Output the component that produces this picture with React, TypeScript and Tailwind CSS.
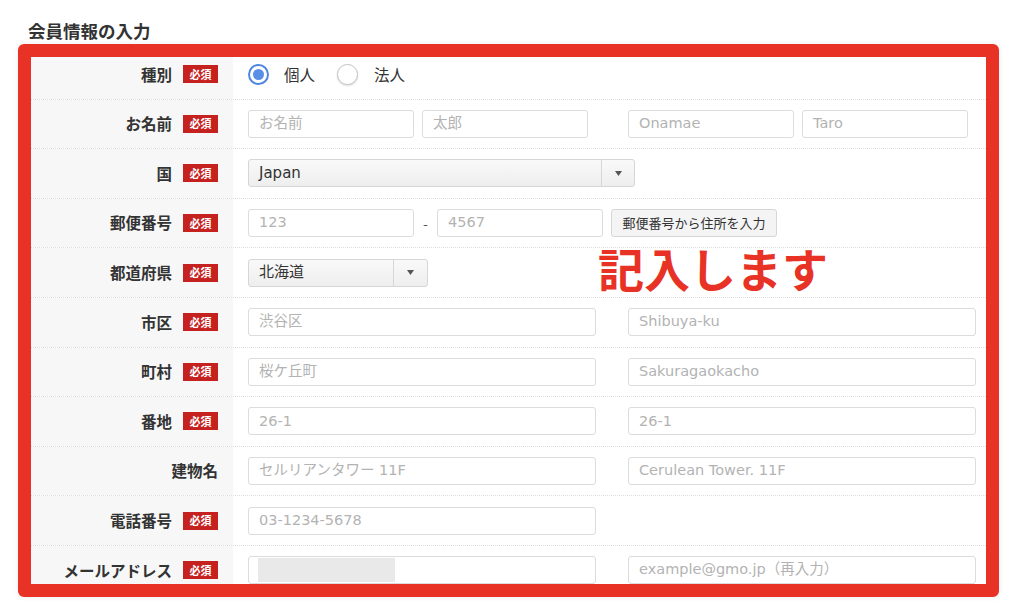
const jp = { fontFamily: '"Noto Sans CJK JP", "Noto Sans", sans-serif' }
const latin = { fontFamily: '"DejaVu Sans", "Noto Sans CJK JP", sans-serif' }

function Badge() {
  return (
    <span className="ml-[11px] inline-flex h-[18px] w-[35px] items-center justify-center bg-[#c4211f] text-[11px] font-bold leading-none text-white">
      必須
    </span>
  )
}

function Field({ w, ph, className = '' }: { w: string; ph: string; className?: string }) {
  return (
    <div
      className={`flex h-[28px] items-center rounded-[3px] border border-[#dcdcdc] bg-white px-[10px] text-[14.5px] text-[#b3b3b3] ${w} ${className}`}
      style={latin}
    >
      {ph}
    </div>
  )
}

function Select({ w, value, arrowAt }: { w: string; value: string; arrowAt: string }) {
  return (
    <div
      className={`flex h-[28px] items-center rounded-[3px] border border-[#d6d6d6] bg-gradient-to-b from-[#f9f9f9] to-[#eeeeee] text-[15px] text-[#333] ${w}`}
      style={latin}
    >
      <span className={`pl-[10px] ${arrowAt}`}>{value}</span>
      <span className="flex h-full flex-1 items-center justify-center border-l border-[#d6d6d6]">
        <svg width="7" height="5" viewBox="0 0 7 5">
          <path d="M0 0h7L3.5 5z" fill="#555" />
        </svg>
      </span>
    </div>
  )
}

function Row({ label, required = true, children }: { label: string; required?: boolean; children?: React.ReactNode }) {
  return (
    <div className="flex h-[49.6px] border-b border-dotted border-[#dedede]">
      <div className="flex w-[202px] shrink-0 items-center justify-end bg-[#f7f7f7] pr-[15px]">
        <span className="text-[15.5px] font-bold text-[#333]">{label}</span>
        {required && <Badge />}
      </div>
      <div className="flex flex-1 items-center pl-[15px]">{children}</div>
    </div>
  )
}

export default function App() {
  return (
    <div className="relative h-[612px] w-[1024px] overflow-hidden bg-white" style={jp}>
      <h1 className="pl-[28px] pt-[20px] text-[17.5px] font-bold leading-[22px] text-[#333]">会員情報の入力</h1>

      <div className="ml-[18px] mt-[2px] h-[553px] w-[981px] overflow-hidden rounded-[6px] border-[13px] border-[#e83226] bg-white shadow-[0_0_6px_rgba(0,0,0,0.08)]">
        <div className="-mt-[7px]">
          <Row label="種別">
            <span className="flex h-[21px] w-[21px] items-center justify-center rounded-full border-2 border-[#4f86e0] bg-white">
              <span className="h-[11px] w-[11px] rounded-full bg-[#5a8fe6]" />
            </span>
            <span className="ml-[15px] text-[15.5px] text-[#333]">個人</span>
            <span className="ml-[22px] h-[21px] w-[21px] rounded-full border border-[#c4c4c4] bg-white shadow-[0_1px_2px_rgba(0,0,0,0.15)]" />
            <span className="ml-[16px] text-[15.5px] text-[#333]">法人</span>
          </Row>
          <Row label="お名前">
            <Field w="w-[166px]" ph="お名前" />
            <Field w="w-[166px]" ph="太郎" className="ml-[8px]" />
            <Field w="w-[166px]" ph="Onamae" className="ml-[40px]" />
            <Field w="w-[166px]" ph="Taro" className="ml-[8px]" />
          </Row>
          <Row label="国">
            <Select w="w-[387px]" value="Japan" arrowAt="w-[352px]" />
          </Row>
          <Row label="郵便番号">
            <Field w="w-[166px]" ph="123" />
            <span className="w-[23px] text-center text-[14px] text-[#555]">-</span>
            <Field w="w-[166px]" ph="4567" />
            <div className="ml-[8px] flex h-[28px] w-[166px] items-center justify-center rounded-[3px] border border-[#d6d6d6] bg-[#f4f4f4] text-[13px] text-[#333]">
              郵便番号から住所を入力
            </div>
          </Row>
          <Row label="都道府県">
            <Select w="w-[180px]" value="北海道" arrowAt="w-[144px]" />
          </Row>
          <Row label="市区">
            <Field w="w-[348px]" ph="渋谷区" />
            <Field w="w-[348px]" ph="Shibuya-ku" className="ml-[32px]" />
          </Row>
          <Row label="町村">
            <Field w="w-[348px]" ph="桜ケ丘町" />
            <Field w="w-[348px]" ph="Sakuragaokacho" className="ml-[32px]" />
          </Row>
          <Row label="番地">
            <Field w="w-[348px]" ph="26-1" />
            <Field w="w-[348px]" ph="26-1" className="ml-[32px]" />
          </Row>
          <Row label="建物名" required={false}>
            <Field w="w-[348px]" ph="セルリアンタワー 11F" />
            <Field w="w-[348px]" ph="Cerulean Tower. 11F" className="ml-[32px]" />
          </Row>
          <Row label="電話番号">
            <Field w="w-[348px]" ph="03-1234-5678" />
          </Row>
          <Row label="メールアドレス">
            <div className="flex h-[28px] w-[348px] items-stretch rounded-[3px] border border-[#dcdcdc] bg-white py-[1px] pl-[9px]">
              <span className="w-[137px] bg-[#e9e9e9]" />
            </div>
            <Field w="w-[348px]" ph="example@gmo.jp（再入力）" className="ml-[32px]" />
          </Row>
        </div>
      </div>

      <div className="absolute left-[598px] top-[244px] text-[46px] font-bold leading-none text-[#e83226]">
        記入します
      </div>
    </div>
  )
}
